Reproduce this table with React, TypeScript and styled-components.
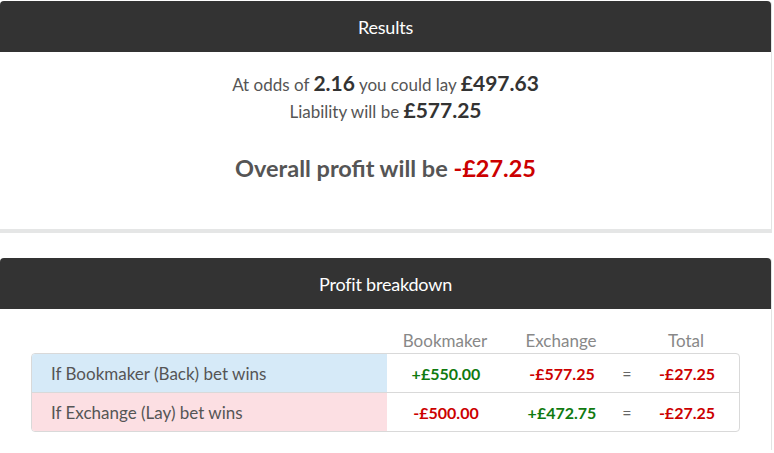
import styled, { createGlobalStyle } from 'styled-components';

const GlobalStyle = createGlobalStyle`
  body {
    margin: 0;
    background: #ffffff;
    font-family: Lato, 'Open Sans', sans-serif;
    color: #555555;
  }
`;

type Row = {
  label: string;
  tone: 'back' | 'lay';
  bookmaker: string;
  exchange: string;
  total: string;
};

const rows: Row[] = [
  { label: 'If Bookmaker (Back) bet wins', tone: 'back', bookmaker: '+£550.00', exchange: '-£577.25', total: '-£27.25' },
  { label: 'If Exchange (Lay) bet wins', tone: 'lay', bookmaker: '-£500.00', exchange: '+£472.75', total: '-£27.25' },
];

const App = () => {
  return (
    <Page>
      <GlobalStyle />
      <Card>
        <CardHeader>Results</CardHeader>
        <ResultsBody>
          <Line>
            At odds of <Big>2.16</Big> you could lay <Big>£497.63</Big>
          </Line>
          <Line>
            Liability will be <Big>£577.25</Big>
          </Line>
          <Overall>
            Overall profit will be <Money $neg>-£27.25</Money>
          </Overall>
        </ResultsBody>
      </Card>
      <Card>
        <CardHeader>Profit breakdown</CardHeader>
        <BreakdownBody>
          <HeadRow>
            <span />
            <ColHead>Bookmaker</ColHead>
            <ColHead>Exchange</ColHead>
            <span />
            <ColHead>Total</ColHead>
          </HeadRow>
          <Table>
            {rows.map((r) => (
              <TableRow key={r.label}>
                <Label $tone={r.tone}>{r.label}</Label>
                <Amount $neg={r.bookmaker.startsWith('-')}>{r.bookmaker}</Amount>
                <Amount $neg={r.exchange.startsWith('-')}>{r.exchange}</Amount>
                <Equals>=</Equals>
                <Amount $neg={r.total.startsWith('-')}>{r.total}</Amount>
              </TableRow>
            ))}
          </Table>
        </BreakdownBody>
      </Card>
    </Page>
  );
};
export default App;

const Page = styled.div`
  width: 772px;
  padding-top: 1px;
  display: flex;
  flex-direction: column;
  gap: 29px;
`;

const Card = styled.section`
  background: #ffffff;
  border-radius: 4px 4px 0 0;
  border-right: 1px solid #e3e3e3;
  box-shadow: 0 4px 0 #e5e6e6;
`;

const CardHeader = styled.h2`
  margin: 0;
  height: 51px;
  display: flex;
  align-items: center;
  justify-content: center;
  background: #333333;
  border-radius: 4px 4px 0 0;
  color: #ffffff;
  font-size: 18px;
  font-weight: 400;
  letter-spacing: -0.2px;
`;

const ResultsBody = styled.div`
  display: flex;
  flex-direction: column;
  align-items: center;
  padding: 19px 0 46px;
`;

const Line = styled.div`
  font-size: 17px;
  line-height: 27px;
  color: #555555;
`;

const Big = styled.b`
  font-size: 21px;
  line-height: 1;
  font-weight: 700;
  color: #333333;
`;

const Overall = styled.div`
  margin-top: 28px;
  font-size: 23.5px;
  line-height: 30px;
  font-weight: 700;
  color: #555555;
`;

const Money = styled.span<{ $neg?: boolean }>`
  color: ${(p) => (p.$neg ? '#cc0000' : '#008000')};
`;

const grid = `
  display: grid;
  grid-template-columns: 355px 118px 114px 16px 1fr;
  align-items: center;
`;

const BreakdownBody = styled.div`
  padding: 18px 31px 18px;
`;

const HeadRow = styled.div`
  ${grid}
  height: 26px;
  margin-right: 2px;
`;

const ColHead = styled.div`
  text-align: center;
  font-size: 17px;
  color: #888888;
`;

const Table = styled.div`
  border: 1px solid #d9d9d9;
  border-radius: 4px;
  overflow: hidden;
`;

const TableRow = styled.div`
  ${grid}
  height: 38px;
  & + & {
    border-top: 1px solid #d9d9d9;
  }
`;

const Label = styled.div<{ $tone: 'back' | 'lay' }>`
  height: 100%;
  display: flex;
  align-items: center;
  padding-left: 19px;
  font-size: 17px;
  color: #555555;
  background: ${(p) => (p.$tone === 'back' ? '#d6eaf8' : '#fcdfe3')};
`;

const Amount = styled.div<{ $neg?: boolean }>`
  text-align: center;
  font-size: 16px;
  font-weight: 700;
  color: ${(p) => (p.$neg ? '#cc0000' : '#107a10')};
`;

const Equals = styled.div`
  text-align: center;
  font-size: 16px;
  color: #666666;
`;
